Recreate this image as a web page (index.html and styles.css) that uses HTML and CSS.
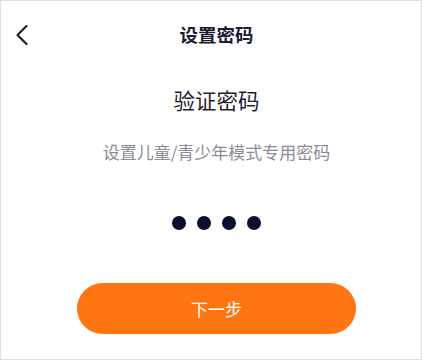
FILE: index.html
```html
<!DOCTYPE html>
<html lang="zh-CN">
<head>
<meta charset="utf-8">
<title>设置密码</title>
<link rel="stylesheet" href="styles.css">
</head>
<body>
<div class="frame">
  <header class="topbar">
    <button class="back" aria-label="返回">
      <svg width="14" height="22" viewBox="0 0 14 22"><path d="M11.5 2 L2.5 11 L11.5 20" fill="none" stroke="#222" stroke-width="2.2" stroke-linecap="round" stroke-linejoin="round"/></svg>
    </button>
    <h1 class="title">设置密码</h1>
  </header>
  <main class="content">
    <h2 class="heading">验证密码</h2>
    <p class="sub">设置儿童/青少年模式专用密码</p>
    <div class="dots">
      <span class="dot"></span><span class="dot"></span><span class="dot"></span><span class="dot"></span>
    </div>
    <button class="next">下一步</button>
  </main>
</div>
</body>
</html>
```
FILE: styles.css
```css
* { box-sizing: border-box; }
html, body { margin: 0; padding: 0; }
body {
  width: 422px;
  height: 360px;
  background: #fff;
  font-family: "Noto Sans CJK SC", "Noto Sans", sans-serif;
}
.frame {
  width: 422px;
  height: 360px;
  border: 1px solid #e0e0e0;
  display: flex;
  flex-direction: column;
  overflow: hidden;
}
.topbar {
  height: 66px;
  display: flex;
  align-items: center;
  padding-left: 14px;
  position: relative;
}
.back {
  border: 0;
  background: none;
  padding: 0;
  width: 16px;
  height: 22px;
  display: flex;
  align-items: center;
  margin-top: 2px;
}
.title {
  flex: 1;
  margin: 0;
  text-align: center;
  font-size: 18.5px;
  font-weight: 700;
  color: #1b1b2f;
  padding-right: 19px;
  line-height: 1;
}
.content {
  display: flex;
  flex-direction: column;
  align-items: center;
  padding-left: 11px;
}
.heading {
  margin: 18px 0 0;
  font-size: 21.5px;
  font-weight: 400;
  line-height: 30px;
  color: #1e1e2e;
}
.sub {
  margin: 25px 0 0;
  font-size: 17px;
  line-height: 24px;
  color: #8c8c99;
}
.dots {
  display: flex;
  gap: 11px;
  margin-top: 52px;
}
.dot {
  width: 14px;
  height: 14px;
  border-radius: 50%;
  background: #0c1030;
}
.next {
  margin-top: 53px;
  width: 279px;
  height: 51px;
  border: 0;
  border-radius: 26px;
  background: #ff7512;
  color: #fff;
  font-family: inherit;
  font-size: 17px;
}
```
